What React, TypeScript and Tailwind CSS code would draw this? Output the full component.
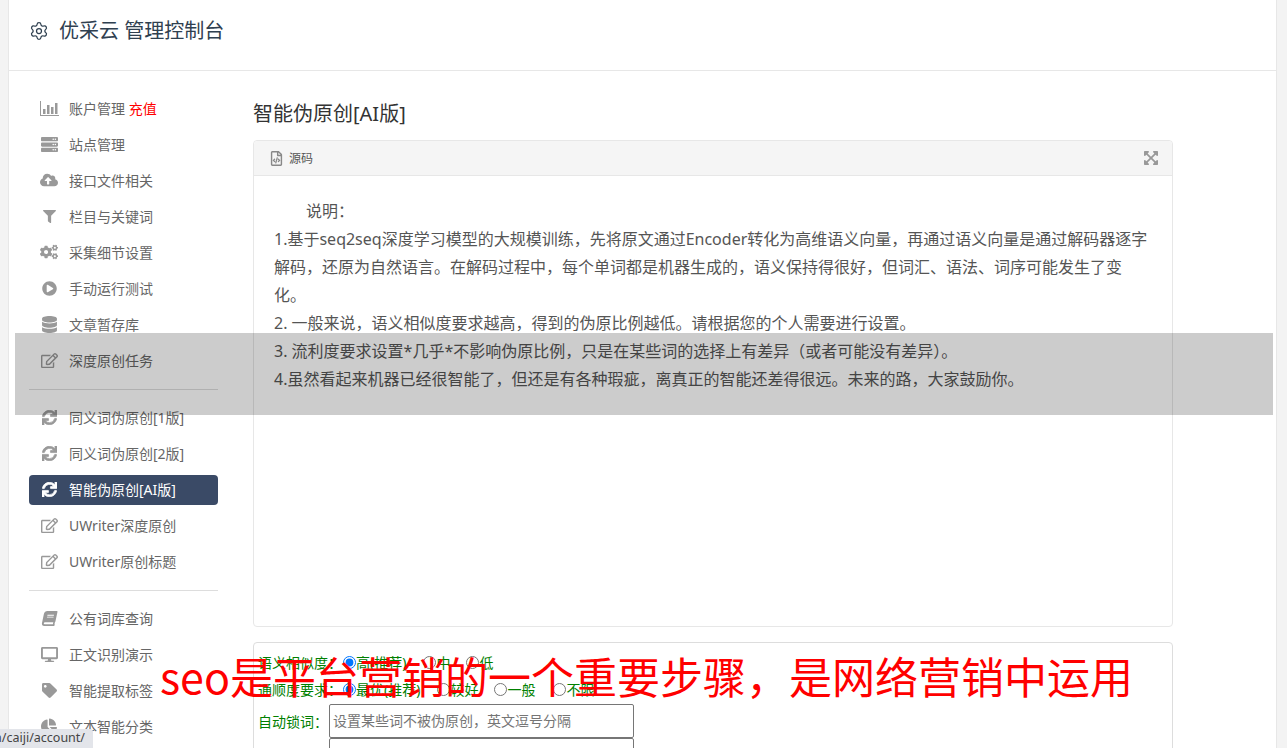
import React from "react";
import {
  FaServer, FaCloudUploadAlt, FaFilter, FaCogs, FaPlayCircle, FaDatabase, FaRegEdit, FaSync,
  FaBook, FaDesktop, FaTag, FaChartPie, FaExpandArrowsAlt, FaRegFileCode,
} from "react-icons/fa";
import { Settings } from "lucide-react";

const font = { fontFamily: '"Noto Sans", "Noto Sans CJK SC", sans-serif' };

function BarIcon() {
  return (
    <svg width="19" height="15" viewBox="0 0 19 15" fill="currentColor">
      <path d="M0 0h1v14h18v1H0z" />
      <rect x="3" y="8" width="2.5" height="5" />
      <rect x="7" y="4" width="2.5" height="9" />
      <rect x="11" y="6" width="2.5" height="7" />
      <rect x="15" y="2" width="2.5" height="11" />
    </svg>
  );
}

const Sync = () => <FaSync size={15} stroke="currentColor" strokeWidth={24} />;

type Item = { icon: React.ReactNode; label: React.ReactNode; active?: boolean };

const g1: Item[] = [
  { icon: <BarIcon />, label: <>账户管理 <span className="text-[#ff0000]">充值</span></> },
  { icon: <FaServer size={17} />, label: "站点管理" },
  { icon: <FaCloudUploadAlt size={18} />, label: "接口文件相关" },
  { icon: <FaFilter size={13} />, label: "栏目与关键词" },
  { icon: <FaCogs size={18} />, label: "采集细节设置" },
  { icon: <FaPlayCircle size={15} />, label: "手动运行测试" },
  { icon: <FaDatabase size={17} />, label: "文章暂存库" },
  { icon: <FaRegEdit size={17} />, label: "深度原创任务" },
];
const g2: Item[] = [
  { icon: <Sync />, label: "同义词伪原创[1版]" },
  { icon: <Sync />, label: "同义词伪原创[2版]" },
  { icon: <Sync />, label: "智能伪原创[AI版]", active: true },
  { icon: <FaRegEdit size={17} />, label: "UWriter深度原创" },
  { icon: <FaRegEdit size={17} />, label: "UWriter原创标题" },
];
const g3: Item[] = [
  { icon: <FaBook size={15} className="-skew-x-12" />, label: "公有词库查询" },
  { icon: <FaDesktop size={17} />, label: "正文识别演示" },
  { icon: <FaTag size={15} />, label: "智能提取标签" },
  { icon: <FaChartPie size={16} />, label: "文本智能分类" },
];

function NavGroup({ items }: { items: Item[] }) {
  return (
    <div className="flex flex-col gap-[6px]">
      {items.map((it, i) => (
        <div
          key={i}
          className={
            "flex h-[30px] items-center rounded-[4px] pb-[2px] text-[14px] " +
            (it.active ? "bg-[#3a4a66] text-white" : "text-[#666666]")
          }
        >
          <span className={"flex w-[40px] shrink-0 justify-center " + (it.active ? "text-white" : "text-[#999999]")}>
            {it.icon}
          </span>
          <span className="whitespace-nowrap">{it.label}</span>
        </div>
      ))}
    </div>
  );
}

function Radio({ name, label, checked, className }: { name: string; label: string; checked?: boolean; className?: string }) {
  return (
    <label className={"flex items-center " + (className ?? "")}>
      <input type="radio" name={name} defaultChecked={checked} className="m-0 h-[13px] w-[13px]" />
      <span className="whitespace-nowrap">{label}</span>
    </label>
  );
}

export default function App() {
  return (
    <div className="relative h-[748px] w-full overflow-hidden bg-[#f3f3f3] pl-[8px] pr-[10px]" style={font}>
      <div className="flex h-full flex-col border-x border-[#e7e7e7] bg-white">
        <header className="flex h-[71px] shrink-0 items-center gap-[10px] border-b border-[#e7e7e7] pb-[8px] pl-[20px] text-[20px] text-[#2f4050]">
          <Settings size={20} strokeWidth={1.5} />
          <span>优采云 管理控制台</span>
        </header>
        <div className="flex min-h-0 flex-1 gap-[35px] pl-[20px]">
          <nav className="w-[189px] shrink-0 pt-[23px]">
            <NavGroup items={g1} />
            <div className="my-[13px] h-px bg-[#dddddd]" />
            <NavGroup items={g2} />
            <div className="my-[13px] h-px bg-[#dddddd]" />
            <NavGroup items={g3} />
          </nav>
          <main className="w-[920px] shrink-0">
            <h2 className="mt-[30px] text-[20px] leading-[26px] text-[#333333]">智能伪原创[AI版]</h2>
            <section className="mt-[13px] h-[487px] rounded-[4px] border border-[#e7e7e7]">
              <div className="flex h-[35px] items-center justify-between rounded-t-[4px] border-b border-[#e7e7e7] bg-[#f5f5f5] pl-[15px] pr-[13px]">
                <div className="flex items-center gap-[5px] text-[12px] text-[#555555]">
                  <FaRegFileCode size={15} className="text-[#888888]" />
                  <span className="pt-[2px]">源码</span>
                </div>
                <FaExpandArrowsAlt size={16} className="text-[#999999]" />
              </div>
              <div className="px-[20px] pt-[21px] text-[16px] leading-[28px] text-[#555555]">
                <p className="pl-[32px]">说明：</p>
                <p className="whitespace-nowrap">1.基于seq2seq深度学习模型的大规模训练，先将原文通过Encoder转化为高维语义向量，再通过语义向量是通过解码器逐字</p>
                <p className="whitespace-nowrap">解码，还原为自然语言。在解码过程中，每个单词都是机器生成的，语义保持得很好，但词汇、语法、词序可能发生了变</p>
                <p>化。</p>
                <p className="whitespace-nowrap">2. 一般来说，语义相似度要求越高，得到的伪原比例越低。请根据您的个人需要进行设置。</p>
                <p className="whitespace-nowrap">3. 流利度要求设置*几乎*不影响伪原比例，只是在某些词的选择上有差异（或者可能没有差异）。</p>
                <p className="whitespace-nowrap">4.虽然看起来机器已经很智能了，但还是有各种瑕疵，离真正的智能还差得很远。未来的路，大家鼓励你。</p>
              </div>
            </section>
            <section className="mt-[15px] h-[200px] rounded-t-[4px] border border-[#dddddd] pl-[4px] pt-[9px] text-[14px] text-[#008000]">
              <div className="flex h-[20px] items-center">
                <span className="w-[85px] shrink-0 whitespace-nowrap">语义相似度：</span>
                <Radio name="a" label="高(推荐)" checked />
                <Radio name="a" label="中" className="ml-[17px]" />
                <Radio name="a" label="低" className="ml-[16px]" />
              </div>
              <div className="mt-[7px] flex h-[20px] items-center">
                <span className="w-[85px] shrink-0 whitespace-nowrap">通顺度要求：</span>
                <Radio name="b" label="最优(推荐)" checked />
                <Radio name="b" label="较好" className="ml-[17px]" />
                <Radio name="b" label="一般" className="ml-[16px]" />
                <Radio name="b" label="不限" className="ml-[18px]" />
              </div>
              <div className="mt-[5px] flex items-start">
                <span className="mt-[7px] w-[71px] shrink-0 whitespace-nowrap">自动锁词：</span>
                <div className="flex w-[305px] flex-col">
                  <textarea
                    rows={1}
                    readOnly
                    placeholder="设置某些词不被伪原创，英文逗号分隔"
                    className="h-[34px] w-full resize-none rounded-[2px] border border-[#767676] px-[3px] py-[6px] text-[14px] leading-[20px] text-[#000000] outline-none placeholder:text-[#757575]"
                  />
                  <textarea
                    rows={1}
                    readOnly
                    className="h-[34px] w-full resize-none rounded-[2px] border border-[#767676] outline-none"
                  />
                </div>
              </div>
            </section>
          </main>
        </div>
      </div>

      <div className="absolute left-[15px] top-[333px] h-[82px] w-[1258px] bg-black/20" />
      <div className="absolute left-[160px] top-[645px] whitespace-nowrap text-[43px] leading-[60px] text-[#ff0000]" style={{ fontFamily: '"Noto Sans CJK SC", sans-serif' }}>
        seo是平台营销的一个重要步骤，是网络营销中运用
      </div>
      <div className="absolute bottom-0 left-0 flex h-[19px] w-[93px] items-center justify-end overflow-hidden rounded-tr-[3px] bg-[#e3e5ea] pr-[8px] text-[12.5px] text-[#444444]" style={{ fontFamily: '"Noto Sans", sans-serif' }}>
        <span className="whitespace-nowrap">n/caiji/account/</span>
      </div>
    </div>
  );
}
